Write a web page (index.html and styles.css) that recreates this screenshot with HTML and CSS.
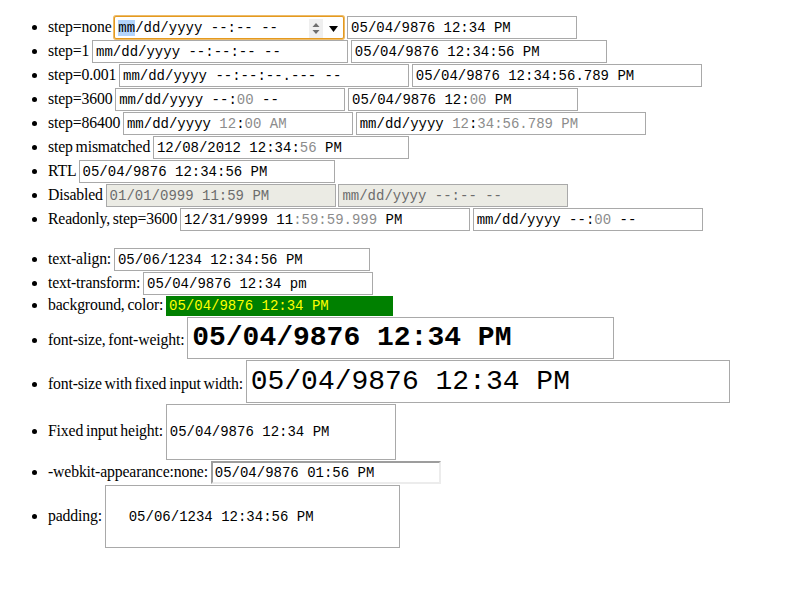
FILE: index.html
```html
<!DOCTYPE html>
<html>
<head>
<meta charset="utf-8">
<title>datetime-local appearance</title>
<link rel="stylesheet" href="styles.css">
</head>
<body>
<ul class="first">
<li>step=none <span class="dt w-min focused"><span class="txt"><span class="sel">mm</span>/dd/yyyy --:-- --</span><svg class="spin" width="14" height="19" viewBox="0 0 14 19"><rect width="14" height="19" fill="#efefef"/><polygon points="3.5,8 10.5,8 7,4" fill="#6e6e6e"/><polygon points="3.5,11 10.5,11 7,15" fill="#6e6e6e"/></svg><svg class="drop" width="9" height="6" viewBox="0 0 9 6"><polygon points="0,0 9,0 4.5,6" fill="#000"/></svg></span> <span class="dt w-min">05/04/9876 12:34 PM</span></li>
<li>step=1 <span class="dt w-sec">mm/dd/yyyy --:--:-- --</span> <span class="dt w-sec">05/04/9876 12:34:56 PM</span></li>
<li>step=0.001 <span class="dt w-ms">mm/dd/yyyy --:--:--.--- --</span> <span class="dt w-ms">05/04/9876 12:34:56.789 PM</span></li>
<li>step=3600 <span class="dt w-min">mm/dd/yyyy --:<span class="dim">00</span> --</span> <span class="dt w-min">05/04/9876 12:<span class="dim">00</span> PM</span></li>
<li>step=86400 <span class="dt w-min">mm/dd/yyyy <span class="dim">12</span>:<span class="dim">00 AM</span></span> <span class="dt w-ms">mm/dd/yyyy <span class="dim">12</span>:<span class="dim">34:56.789 PM</span></span></li>
<li>step mismatched <span class="dt w-sec">12/08/2012 12:34:<span class="dim">56</span> PM</span></li>
<li>RTL <span class="dt w-sec">05/04/9876 12:34:56 PM</span></li>
<li>Disabled <span class="dt w-min disabled">01/01/0999 11:59 PM</span> <span class="dt w-min disabled">mm/dd/yyyy --:-- --</span></li>
<li>Readonly, step=3600 <span class="dt w-ms">12/31/9999 11<span class="dim">:59:59.999</span> PM</span> <span class="dt w-min">mm/dd/yyyy --:<span class="dim">00</span> --</span></li>
</ul>
<ul>
<li>text-align: <span class="dt w-sec">05/06/1234 12:34:56 PM</span></li>
<li>text-transform: <span class="dt w-min">05/04/9876 12:34 pm</span></li>
<li>background, color: <span class="dt colored">05/04/9876 12:34 PM</span></li>
<li>font-size, font-weight: <span class="dt big bold">05/04/9876 12:34 PM</span></li>
<li>font-size with fixed input width: <span class="dt big wide">05/04/9876 12:34 PM</span></li>
<li>Fixed input height: <span class="dt w-min tall">05/04/9876 12:34 PM</span></li>
<li>-webkit-appearance:none: <span class="dt w-min plain">05/04/9876 01:56 PM</span></li>
<li>padding: <span class="dt padded">05/06/1234 12:34:56 PM</span></li>
</ul>
</body>
</html>
```

FILE: styles.css
```css
html {
  margin: 0;
  padding: 0;
}

body {
  margin: 0;
  padding: 16px 8px 8px;
  background: #fff;
  color: #000;
  font-family: "Liberation Serif", "Times New Roman", serif;
  font-size: 15.75px;
  word-spacing: -1px;
  letter-spacing: -0.15px;
}

ul {
  margin: 16px 0;
  padding-left: 40px;
}

ul.first {
  margin-top: 0;
}

.dt {
  display: inline-block;
  box-sizing: border-box;
  height: 23px;
  margin-bottom: 1px;
  padding: 2px 3px 0;
  border: 1px solid #a9a9a9;
  background: #fff;
  color: #000;
  font-family: "Liberation Mono", "Courier New", monospace;
  font-size: 14px;
  line-height: 19px;
  letter-spacing: 0;
  word-spacing: 0;
  white-space: pre;
  vertical-align: baseline;
}

.w-min { width: 230px; }
.w-sec { width: 256px; }
.w-ms { width: 290px; }

.dim { color: #8c8c8c; }

.focused {
  display: inline-flex;
  align-items: center;
  padding-right: 5px;
  border-color: #e59a1f;
  border-radius: 2px;
  box-shadow: 0 0 0 1px #ecbb6a;
}

.focused .txt {
  line-height: 19px;
  align-self: flex-start;
}

.sel { background: #b3d4fc; }

.spin {
  display: block;
  margin-left: auto;
  align-self: flex-start;
}

.drop {
  display: block;
  margin-left: 6px;
}

.disabled {
  background: #ebebe4;
  color: #6d6d6d;
}

.colored {
  width: 227px;
  height: 20px;
  padding: 1px 3px 0;
  border: none;
  background: #008000;
  color: #ffff00;
}

.big {
  font-size: 28px;
  padding: 0 4px;
}

.bold {
  width: 427px;
  height: 42px;
  line-height: 40px;
  font-weight: bold;
}

.wide {
  width: 484px;
  height: 43px;
  line-height: 41px;
}

.tall {
  height: 56px;
  padding-top: 0;
  line-height: 54px;
}

.plain {
  border-width: 2px;
  border-style: solid;
  border-color: #9d9d9d #ececec #ececec #9d9d9d;
  padding: 1px 2px 0;
}

.padded {
  width: 295px;
  height: 63px;
  padding: 22px 23px 20px;
}
```
